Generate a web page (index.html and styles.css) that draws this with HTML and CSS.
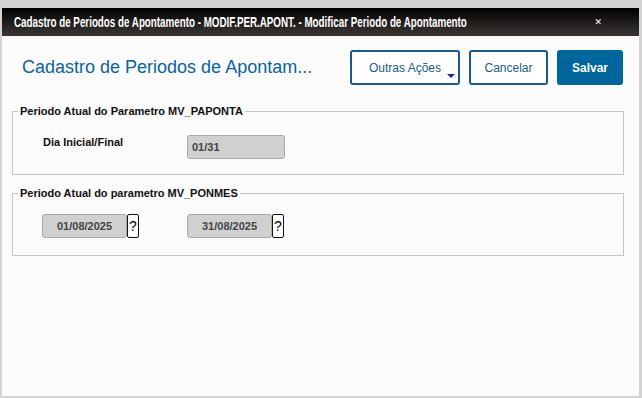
FILE: index.html
```html
<!DOCTYPE html>
<html lang="pt-BR">
<head>
    <meta charset="UTF-8">
    <title>Cadastro de Periodos de Apontamento</title>
    <link rel="stylesheet" href="styles.css">
</head>
<body>
    <div class="dialog">
        <div class="dialog-title">
            <span class="title-text">Cadastro de Periodos de Apontamento - MODIF.PER.APONT. - Modificar Periodo de Apontamento</span>
            <span class="close">&#x2715;</span>
        </div>
        <div class="dialog-body">
            <div class="header">
                <h1>Cadastro de Periodos de Apontam...</h1>
                <div class="actions">
                    <button class="btn btn-menu">Outras Ações<span class="caret"></span></button>
                    <button class="btn btn-cancel">Cancelar</button>
                    <button class="btn btn-primary">Salvar</button>
                </div>
            </div>

            <fieldset class="group">
                <legend>Periodo Atual do Parametro MV_PAPONTA</legend>
                <div class="row">
                    <label class="field-label">Dia Inicial/Final</label>
                    <input class="field field-wide" type="text" value="01/31" disabled>
                </div>
            </fieldset>

            <fieldset class="group group-dates">
                <legend>Periodo Atual do parametro MV_PONMES</legend>
                <div class="row">
                    <div class="date">
                        <input class="field field-date" type="text" value="01/08/2025" disabled>
                        <span class="help">?</span>
                    </div>
                    <div class="date">
                        <input class="field field-date" type="text" value="31/08/2025" disabled>
                        <span class="help">?</span>
                    </div>
                </div>
            </fieldset>
        </div>
    </div>
</body>
</html>
```

FILE: styles.css
```css
html, body {
    margin: 0;
    height: 100%;
}
body {
    background-color: #d4d4d4;
    font-family: "Liberation Sans", Arial, sans-serif;
    padding: 8px 3px 2px 2px;
    box-sizing: border-box;
}
.dialog {
    height: 100%;
    background-color: #fbfbfb;
    display: flex;
    flex-direction: column;
}
.dialog-title {
    height: 28px;
    background: linear-gradient(#020202, #3b3633);
    color: #fff;
    display: flex;
    align-items: center;
    justify-content: space-between;
    padding: 0 37px 0 12px;
    font-weight: bold;
    font-size: 14px;
    overflow: hidden;
}
.title-text {
    display: inline-block;
    white-space: nowrap;
    transform: scaleX(0.7);
    transform-origin: left center;
    width: 450px;
}
.close {
    font-family: "DejaVu Sans", sans-serif;
    font-size: 9px;
    font-weight: bold;
}
.dialog-body {
    flex: 1;
    padding: 14px 15px 0 10px;
}
.header {
    display: flex;
    justify-content: space-between;
    align-items: center;
    margin-bottom: 20px;
}
h1 {
    margin: 0 0 0 10px;
    font-size: 18px;
    font-weight: normal;
    color: #0b63a0;
}
.actions {
    display: flex;
    gap: 9px;
    margin-right: 1px;
}
.btn {
    font-family: "Liberation Sans", Arial, sans-serif;
    font-size: 12px;
    color: #1b5a88;
    background-color: #fff;
    border: 2px solid #1b5a88;
    border-radius: 3px;
    height: 35px;
    padding: 0;
    position: relative;
}
.btn-menu {
    width: 110px;
}
.btn-cancel {
    width: 79px;
}
.caret {
    position: absolute;
    right: 3px;
    bottom: 5px;
    border-left: 4px solid transparent;
    border-right: 4px solid transparent;
    border-top: 4px solid #1a2a9a;
}
.btn-primary {
    background-color: #00669b;
    border-color: #00669b;
    color: #fff;
    font-weight: bold;
    width: 66px;
}
.group {
    border: 1px solid #c4c4c4;
    margin: 0;
    padding: 18px 0 15px 5px;
    min-width: 0;
}
.group + .group {
    margin-top: 12px;
}
legend {
    font-size: 11px;
    font-weight: bold;
    color: #111;
    padding: 0 2px;
}
.row {
    display: flex;
    align-items: flex-start;
    padding-left: 25px;
}
.field-label {
    width: 144px;
    font-size: 11px;
    font-weight: bold;
    color: #111;
    padding-top: 1px;
}
.field {
    font-family: "Liberation Sans", Arial, sans-serif;
    font-size: 11px;
    font-weight: bold;
    color: #444;
    background-color: #d0d0d0;
    border: 1px solid #a9a9a9;
    border-radius: 3px;
    height: 24px;
    box-sizing: border-box;
    padding: 0 4px;
}
.field-wide {
    width: 98px;
}
.group-dates {
    padding: 15px 0 17px 5px;
}
.group-dates .row {
    padding-left: 24px;
}
.date {
    display: flex;
    margin-right: 48px;
}
.field-date {
    width: 85px;
    text-align: center;
}
.help {
    width: 12px;
    height: 24px;
    box-sizing: border-box;
    border: 1px solid #111;
    border-radius: 2px;
    background-color: #fff;
    font-size: 14px;
    line-height: 22px;
    text-align: center;
    color: #000;
}
```
